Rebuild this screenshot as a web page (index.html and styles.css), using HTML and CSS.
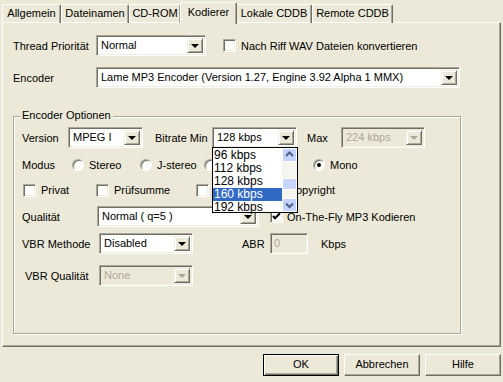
FILE: index.html
```
<!DOCTYPE html>
<html lang="de">
<head>
    <meta charset="UTF-8">
    <title>Kodierer</title>
    <link rel="stylesheet" href="styles.css">
</head>
<body>
    <div class="tabs">
        <div class="tab t-allg">Allgemein</div>
        <div class="tab t-datei">Dateinamen</div>
        <div class="tab t-cd">CD-ROM</div>
        <div class="tab t-kod active">Kodierer</div>
        <div class="tab t-lok">Lokale CDDB</div>
        <div class="tab t-rem">Remote CDDB</div>
    </div>

    <div class="panel">
        <div class="row r-prio">
            <span class="lbl w-main">Thread Priorität</span>
            <div class="combo c-prio"><span class="val">Normal</span><span class="arr"></span></div>
            <span class="check cb-riff"></span>
            <span>Nach Riff WAV Dateien konvertieren</span>
        </div>

        <div class="row r-enc">
            <span class="lbl w-main">Encoder</span>
            <div class="combo c-enc"><span class="val">Lame MP3 Encoder (Version 1.27, Engine 3.92 Alpha 1 MMX)</span><span class="arr"></span></div>
        </div>

        <div class="group">
            <span class="group-title">Encoder Optionen</span>

            <div class="row r-version">
                <span class="lbl w-version">Version</span>
                <div class="combo c-version"><span class="val">MPEG I</span><span class="arr"></span></div>
                <span class="lbl w-bitmin">Bitrate Min</span>
                <div class="combo c-bitmin">
                    <span class="val">128 kbps</span><span class="arr"></span>
                    <!-- open dropdown list -->
                    <div class="droplist">
                        <div class="items">
                            <div class="item">96 kbps</div>
                            <div class="item">112 kbps</div>
                            <div class="item">128 kbps</div>
                            <div class="item sel">160 kbps</div>
                            <div class="item">192 kbps</div>
                        </div>
                        <div class="scroll">
                            <div class="sb-btn up"><svg width="15" height="14" viewBox="0 0 15 14"><path d="M4 8 L7.5 4.5 L11 8" fill="none" stroke="#4d6185" stroke-width="2"/></svg></div>
                            <div class="sb-track">
                                <div class="sb-thumb"></div>
                            </div>
                            <div class="sb-btn down"><svg width="15" height="14" viewBox="0 0 15 14"><path d="M4 5.5 L7.5 9 L11 5.5" fill="none" stroke="#4d6185" stroke-width="2"/></svg></div>
                        </div>
                    </div>
                </div>
                <span class="lbl w-max">Max</span>
                <div class="combo c-max disabled"><span class="val">224 kbps</span><span class="arr"></span></div>
            </div>

            <div class="row r-modus">
                <span class="lbl w-modus">Modus</span>
                <span class="opt o-stereo"><span class="radio"></span>Stereo</span>
                <span class="opt o-joint"><span class="radio"></span>J-stereo</span>
                <span class="opt o-dual"><span class="radio"></span></span>
                <span class="opt"><span class="radio on"></span>Mono</span>
            </div>

            <div class="row r-flags">
                <span class="opt o-privat"><span class="check"></span>Privat</span>
                <span class="opt o-pruef"><span class="check"></span>Prüfsumme</span>
                <span class="opt o-orig"><span class="check"></span></span>
                <span class="opt"><span class="check"></span>Copyright</span>
            </div>

            <div class="row r-qual">
                <span class="lbl w-qual">Qualität</span>
                <div class="combo c-qual"><span class="val">Normal ( q=5 )</span><span class="arr"></span></div>
                <span class="opt o-fly"><span class="check on"><svg width="11" height="11" viewBox="0 0 11 11"><path d="M2 5 L4 7.2 L9 2.2" fill="none" stroke="#000" stroke-width="2"/></svg></span>On-The-Fly MP3 Kodieren</span>
            </div>

            <div class="row r-vbr">
                <span class="lbl w-vbr">VBR Methode</span>
                <div class="combo c-vbr"><span class="val">Disabled</span><span class="arr"></span></div>
                <span class="lbl w-abr">ABR</span>
                <div class="field disabled">0</div>
                <span class="lbl w-kbps">Kbps</span>
            </div>

            <div class="row r-vbrq">
                <span class="lbl w-vbrq">VBR Qualität</span>
                <div class="combo c-vbr disabled"><span class="val">None</span><span class="arr"></span></div>
            </div>
        </div>
    </div>

    <div class="buttons">
        <div class="btn default">OK</div>
        <div class="btn">Abbrechen</div>
        <div class="btn">Hilfe</div>
    </div>
</body>
</html>
```

FILE: styles.css
```
body {
    margin: 0;
    background-color: #ece9d8;
    font-family: 'Liberation Sans', Arial, sans-serif;
    font-size: 11px;
    color: #000;
    width: 503px;
    height: 382px;
    overflow: hidden;
}

/* tabs */
.tabs {
    display: flex;
    padding: 4px 0 0 2px;
    height: 18px;
    position: relative;
    z-index: 2;
}

.tab {
    box-sizing: border-box;
    height: 19px;
    text-align: center;
    line-height: 17px;
    border-top: 1px solid #fff;
    border-left: 1px solid #fff;
    border-right: 1px solid #716f64;
    box-shadow: inset -1px 0 0 #aca899;
    border-radius: 2px 2px 0 0;
}

.t-allg { width: 59px; }
.t-datei { width: 68px; }
.t-cd { width: 52px; margin-right: -1px; }
.t-kod { width: 57px; }
.t-lok { width: 76px; margin-left: -1px; }
.t-rem { width: 81px; }

.tab.active {
    height: 22px;
    margin-top: -2px;
    line-height: 18px;
    background-color: #ece9d8;
    position: relative;
    z-index: 3;
}

.panel {
    box-sizing: border-box;
    margin: 0 0 0 2px;
    width: 499px;
    height: 325px;
    border-top: 1px solid #fff;
    border-left: 1px solid #fff;
    border-right: 1px solid #716f64;
    border-bottom: 1px solid #716f64;
    box-shadow: inset -1px -1px 0 #aca899;
    padding: 12px 0 0 10px;
}

/* rows */
.row {
    display: flex;
    align-items: center;
}

.lbl {
    flex: none;
}

.w-main { width: 83px; }

.r-prio { height: 21px; }
.r-enc { height: 21px; margin-top: 11px; }

.cb-riff {
    margin-left: 17px;
    margin-right: 5px;
}

/* combo boxes */
.combo {
    box-sizing: border-box;
    display: flex;
    height: 21px;
    background-color: #fff;
    border: 1px solid;
    border-color: #aca899 #fff #fff #aca899;
    box-shadow: inset 1px 1px 0 #716f64, inset -1px -1px 0 #f1efe2;
    padding: 2px;
    position: relative;
    flex: none;
}

.combo .val {
    flex: 1;
    padding-left: 2px;
    line-height: 15px;
    white-space: nowrap;
    overflow: hidden;
}

.combo .arr {
    box-sizing: border-box;
    width: 16px;
    height: 15px;
    background-color: #ece9d8;
    border: 1px solid;
    border-color: #f1efe2 #716f64 #716f64 #f1efe2;
    box-shadow: inset 1px 1px 0 #fff, inset -1px -1px 0 #aca899;
    position: relative;
}

.combo .arr::after {
    content: '';
    position: absolute;
    left: 3px;
    top: 5px;
    border-left: 4px solid transparent;
    border-right: 4px solid transparent;
    border-top: 4px solid #000;
}

.combo.disabled {
    background-color: #ece9d8;
    color: #aca899;
}

.combo.disabled .arr::after {
    border-top-color: #aca899;
}

.c-prio { width: 110px; }
.c-enc { width: 364px; }

/* group box */
.group {
    box-sizing: border-box;
    position: relative;
    width: 448px;
    height: 218px;
    margin-top: 28px;
    border: 1px solid #aca899;
    box-shadow: 1px 1px 0 #fff, inset 1px 1px 0 #fff;
    padding: 10px 0 0 8px;
}

.group-title {
    position: absolute;
    top: -8px;
    left: 6px;
    padding: 0 2px;
    background-color: #ece9d8;
}

.r-version { height: 21px; }
.w-version { width: 46px; }
.c-version { width: 75px; }
.w-bitmin { width: 57px; margin-left: 12px; }
.c-bitmin { width: 85px; z-index: 5; }
.w-max { width: 34px; margin-left: 10px; }
.c-max { width: 84px; }

/* open list */
.droplist {
    position: absolute;
    top: 19px;
    left: -1px;
    width: 86px;
    height: 66px;
    box-sizing: border-box;
    border: 1px solid #000;
    background-color: #fff;
    display: flex;
    color: #000;
}

.items {
    flex: 1;
    padding-top: 1px;
    font-size: 12px;
}

.item {
    height: 13px;
    line-height: 13px;
    padding-left: 1px;
    white-space: nowrap;
}

.item.sel {
    background-color: #316ac5;
    color: #fff;
}

.scroll {
    width: 15px;
    display: flex;
    flex-direction: column;
    background-color: #f6f5ee;
}

.sb-btn {
    box-sizing: border-box;
    height: 14px;
    background-color: #c3d3fd;
    border: 1px solid #fff;
    border-radius: 2px;
}

.sb-btn svg {
    display: block;
    margin: -1px;
}

.sb-track {
    flex: 1;
    position: relative;
}

.sb-thumb {
    box-sizing: border-box;
    margin-top: 16px;
    height: 12px;
    background-color: #c8d6fb;
    border: 1px solid #fff;
    border-radius: 2px;
}

/* radios and checks */
.r-modus { height: 16px; margin-top: 9px; }
.w-modus { width: 50px; }

.opt {
    display: flex;
    align-items: center;
    flex: none;
    white-space: nowrap;
}

.o-stereo { width: 68px; }
.o-joint { width: 64px; }
.o-dual { width: 109px; }

.radio {
    box-sizing: border-box;
    width: 12px;
    height: 12px;
    margin-right: 5px;
    border-radius: 50%;
    border: 1px solid;
    border-color: #aca899 #fff #fff #aca899;
    box-shadow: inset 1px 1px 0 #716f64;
    background-color: #fff;
    position: relative;
}

.radio.on::after {
    content: '';
    position: absolute;
    left: 3px;
    top: 3px;
    width: 4px;
    height: 4px;
    border-radius: 50%;
    background-color: #000;
}

.check {
    box-sizing: border-box;
    flex: none;
    width: 13px;
    height: 13px;
    margin-right: 5px;
    background-color: #fff;
    border: 1px solid;
    border-color: #aca899 #fff #fff #aca899;
    box-shadow: inset 1px 1px 0 #716f64, inset -1px -1px 0 #f1efe2;
}

.check svg {
    display: block;
}

.r-flags { height: 16px; margin-top: 9px; padding-left: 1px; }
.o-privat { width: 73px; }
.o-pruef { width: 100px; }
.o-orig { width: 74px; }

.r-qual { height: 21px; margin-top: 8px; }
.w-qual { width: 75px; }
.c-qual { width: 162px; }
.o-fly { margin-left: 11px; }
.o-fly .check { margin-right: 4px; }

.r-vbr { height: 21px; margin-top: 6px; }
.w-vbr { width: 77px; }
.c-vbr { width: 94px; }
.w-abr { width: 28px; margin-left: 49px; }
.w-kbps { margin-left: 13px; }

.field {
    box-sizing: border-box;
    width: 38px;
    height: 21px;
    padding: 2px 3px;
    line-height: 15px;
    border: 1px solid;
    border-color: #aca899 #fff #fff #aca899;
    box-shadow: inset 1px 1px 0 #716f64, inset -1px -1px 0 #f1efe2;
}

.field.disabled {
    color: #aca899;
}

.r-vbrq { height: 21px; margin-top: 11px; }
.w-vbrq { width: 74px; padding-left: 3px; }

/* dialog buttons */
.buttons {
    display: flex;
    justify-content: flex-end;
    gap: 5px;
    padding: 7px 2px 0 0;
}

.btn {
    box-sizing: border-box;
    width: 76px;
    height: 22px;
    line-height: 19px;
    text-align: center;
    border: 1px solid;
    border-color: #fff #716f64 #716f64 #fff;
    box-shadow: inset -1px -1px 0 #aca899;
}

.btn.default {
    border: 1px solid #000;
    box-shadow: inset 1px 1px 0 #fff, inset -1px -1px 0 #716f64, inset -2px -2px 0 #aca899;
}
```
